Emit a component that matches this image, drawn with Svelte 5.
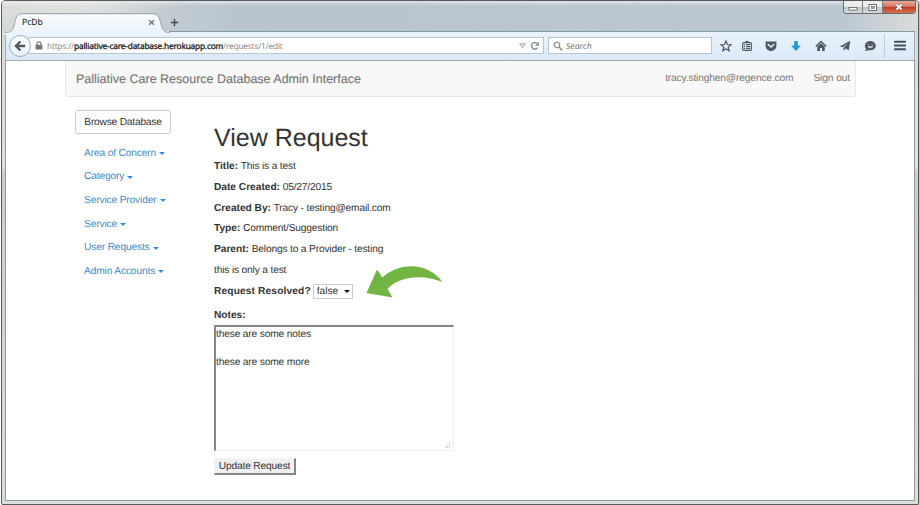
<script>
  const menu = ['Area of Concern', 'Category', 'Service Provider', 'Service', 'User Requests', 'Admin Accounts'];
  const details = [
    ['Title:', 'This is a test'],
    ['Date Created:', '05/27/2015'],
    ['Created By:', 'Tracy - testing@email.com'],
    ['Type:', 'Comment/Suggestion'],
    ['Parent:', 'Belongs to a Provider - testing'],
    ['', 'this is only a test']
  ];
  let resolved = $state('false');
  let notes = $state('these are some notes\n\nthese are some more');
</script>

<div class="window">
  <header class="titlebar">
    <svg class="tab-shape" width="168" height="22" viewBox="0 0 168 22">
      <defs>
        <linearGradient id="tab" x1="0" y1="0" x2="0" y2="1">
          <stop offset="0" stop-color="#f8fbfe" />
          <stop offset="1" stop-color="#e9f2fb" />
        </linearGradient>
      </defs>
      <path d="M0 22V19.5C7 19.5 8 17 9.5 11C11 4 12 1 18 1H147C153 1 154 4 156 11C157.500 17 159 19.500 165 19.500V22Z" fill="url(#tab)" />
      <path d="M0 19.5C7 19.5 8 17 9.5 11C11 4 12 .7 18 .7H147C153 .7 154 4 156 11C157.500 17 159 19.500 165 19.500" fill="none" stroke="#909ba5" stroke-width=".9" />
    </svg>
    <div class="tab">
      <span>PcDb</span>
      <svg width="7" height="7" viewBox="0 0 7 7"><path d="M1 1.200L6 5.800M6 1.200L1 5.800" stroke="#717b84" stroke-width="1.500" /></svg>
    </div>
    <svg class="plus" width="9" height="9" viewBox="0 0 9 9"><path d="M4.500 .8V8.200M.8 4.500H8.200" stroke="#424b54" stroke-width="1.400" /></svg>
    <div class="controls">
      <span class="min"><svg width="18" height="12" viewBox="0 0 18 12"><rect x="5" y="6.500" width="8" height="2.500" fill="#fff" stroke="#5a5e62" stroke-width=".8" /></svg></span>
      <span class="max"><svg width="19" height="12" viewBox="0 0 19 12"><rect x="6" y="3.500" width="7.500" height="6" fill="#fff" stroke="#5a5e62" stroke-width=".9" /><rect x="8.300" y="5.500" width="3" height="2" fill="#aaa" stroke="#5a5e62" stroke-width=".6" /></svg></span>
      <span class="close"><svg width="32" height="12" viewBox="0 0 32 12"><path d="M13.500 3.500L18.500 8.500M18.500 3.500L13.500 8.500" stroke="#744" stroke-width="3" /><path d="M13.500 3.500L18.500 8.500M18.500 3.500L13.500 8.500" stroke="#fff" stroke-width="1.800" /></svg></span>
    </div>
  </header>

  <div class="toolbar">
    <div class="back">
      <svg width="12" height="12" viewBox="0 0 12 12"><path d="M11.200 6H2.500M6.400 1.500L1.900 6L6.400 10.500" fill="none" stroke="#4d5861" stroke-width="2.300" /></svg>
    </div>
    <div class="address">
      <svg class="lock" width="8" height="9" viewBox="0 0 8 9"><path d="M2 4V2.600C2 .2 6 .2 6 2.600V4" fill="none" stroke="#777" stroke-width="1.200" /><rect x=".6" y="3.700" width="6.800" height="4.800" rx=".6" fill="#777" /></svg>
      <span class="url">https://<b>palliative-care-database.herokuapp.com</b>/requests/1/edit</span>
      <svg class="drop" width="7" height="6" viewBox="0 0 7 6"><path d="M.7 .7H6.300L3.500 5.300Z" fill="#e4e6e8" stroke="#a4aab0" stroke-width=".9" /></svg>
      <svg class="reload" width="10" height="10" viewBox="0 0 10 10"><path d="M7.700 6.500A3.300 3.300 0 1 1 7 2.400" fill="none" stroke="#82909a" stroke-width="1.500" /><path d="M9 .7V4.700H5Z" fill="#82909a" /></svg>
    </div>
    <div class="search">
      <svg width="10" height="10" viewBox="0 0 10 10"><circle cx="3.900" cy="3.900" r="2.800" fill="none" stroke="#8b9095" stroke-width="1.300" /><path d="M6 6L9.300 9.300" stroke="#8b9095" stroke-width="1.700" /></svg>
      <i>Search</i>
    </div>
    <div class="icons">
      <svg class="star" viewBox="0 0 12 12"><path d="M6 1L7.400 4.500L11.100 4.700L8.200 7.100L9.200 10.800L6 8.800L2.800 10.800L3.800 7.100L.9 4.700L4.600 4.500Z" fill="none" stroke="#4d5861" stroke-width="1.200" /></svg>
      <svg viewBox="0 0 12 12"><rect x="1.700" y="2.600" width="8.600" height="7.800" rx="1" fill="#e5f0fa" stroke="#4d5861" stroke-width="1.200" /><path d="M3.700 2.500Q4 .8 6 .8Q8 .8 8.300 2.500" fill="#4d5861" /><path d="M3 4.600H4.100M5 4.600H9M3 6.500H4.100M5 6.500H9M3 8.400H4.100M5 8.400H9" stroke="#4d5861" stroke-width="1.100" /></svg>
      <svg viewBox="0 0 12 12"><path d="M.6 1.500H11.400V5.500C11.400 8.700 9 11 6 11C3 11 .6 8.700 .6 5.500Z" fill="#4d5861" /><path d="M3.200 4.500L6 7.100L8.800 4.500" fill="none" stroke="#e5f0fa" stroke-width="1.500" stroke-linecap="round" /></svg>
      <svg viewBox="0 0 12 12"><path d="M4.200 1H7.800V5.500H11L6 11L1 5.500H4.200Z" fill="#239bd7" /></svg>
      <svg viewBox="0 0 12 12"><path d="M.7 6.500L6 1.500L11.300 6.500" fill="none" stroke="#4d5861" stroke-width="1.400" /><path d="M2.300 6.600L6 3.200L9.700 6.600V11H7V8H5V11H2.300Z" fill="#4d5861" /></svg>
      <svg viewBox="0 0 12 12"><path d="M11.200 .8L9.800 10.300L6.600 8.500L4.600 11V7.800L9.500 3L3.600 7.300L.8 6.500Z" fill="#4d5861" /></svg>
      <svg viewBox="0 0 12 12"><ellipse cx="6.300" cy="5.700" rx="5.500" ry="4.600" fill="#4d5861" /><path d="M2.500 8L.8 11L6 10Z" fill="#4d5861" /><path d="M3.200 6.300C4.300 8.300 8.300 8.300 9.400 6.300Z" fill="#e5f0fa" /><path d="M3.500 4.400H5M7.600 4.400H9.100" stroke="#aeb9c3" stroke-width=".8" /></svg>
    </div>
    <div class="burger"><svg width="12" height="11" viewBox="0 0 12 11"><path d="M.8 1.700H11.200M.8 5.500H11.200M.8 9.300H11.200" stroke="#465059" stroke-width="1.900" stroke-linecap="round" /></svg></div>
  </div>

  <div class="page">
    <nav class="navbar">
      <span class="brand">Palliative Care Resource Database Admin Interface</span>
      <span class="user">tracy.stinghen@regence.com</span>
      <span class="signout">Sign out</span>
    </nav>
    <div class="columns">
      <aside>
        <button class="browse">Browse Database</button>
        <ul>
          {#each menu as item}
            <li><span>{item}</span><i class="caret"></i></li>
          {/each}
        </ul>
      </aside>
      <main>
        <h1>View Request</h1>
        {#each details as [label, value]}
          <p>{#if label}<b>{label}</b>&nbsp;{/if}{value}</p>
        {/each}
        <div class="resolve">
          <b>Request Resolved?</b>
          <button class="select" onclick={() => (resolved = resolved === 'false' ? 'true' : 'false')}><span>{resolved}</span><i></i></button>
          <svg class="arrow" width="78" height="33" viewBox="0 0 78 33"><path d="M.5 28L11 4.500L16.500 12.500C31 -1.500 60 -5 76.500 17C57 9 33 11 21.500 24L26.500 32.500Z" fill="#72b544" /></svg>
        </div>
        <label for="notes">Notes:</label>
        <div class="area">
          <textarea id="notes" bind:value={notes} spellcheck="false"></textarea>
          <svg class="grip" width="8" height="7" viewBox="0 0 8 7"><path d="M5 1.500H7M3 3.500H7M1 5.500H7" stroke="#bbb" stroke-width="1" stroke-dasharray="1 1" /></svg>
        </div>
        <button class="update">Update Request</button>
      </main>
    </div>
  </div>
</div>

<style>
  :global(body) { margin: 0; background: #fff; }
  * { box-sizing: border-box; }
  svg { display: block; flex: none; }
  .window {
    width: 918px; height: 505px; margin-left: 1px; overflow: hidden;
    display: flex; flex-direction: column;
    padding: 0 3px 3px;
    border: 1px solid #555b5d; border-radius: 5px 5px 2px 2px;
    border-top-color: #56585e;
    background: linear-gradient(180deg, #d5dbd8 0, #dfe3df 33%, #c8d0cb 34%, #d9dfda 100%);
    font-family: "Liberation Sans", Arial, sans-serif;
    text-rendering: geometricPrecision;
    box-shadow: 2px 0 0 #c4c4c4;
  }
  .titlebar {
    height: 30px; flex: none; margin: 0 -3px; padding: 0 2px 0 4px; display: flex; position: relative;
    background:
      linear-gradient(180deg, #eef1f0b0 0, #ffffff00 5px),
      radial-gradient(ellipse 100px 26px at 70px 3px, #e3e5e2, #e3e5e200),
      linear-gradient(90deg, #d6dad6 0, #c9d0d3 110px, #b8c4ce 240px, #bac6d0 840px, #d9dcd9 100%);
  }
  .titlebar::after { content: ""; position: absolute; right: 3px; left: 167px; bottom: -1px; height: 1px; background: #8898a5; }
  .tab-shape { position: absolute; left: 3px; top: 12px; z-index: 1; }
  .tab { position: relative; z-index: 2; width: 133px; margin: 12px 0 0 16px; height: 18px; display: flex; align-items: center; justify-content: space-between; font: 8.600px "Noto Sans", sans-serif; color: #111; }
  .plus { margin: 17px 0 0 15px; }
  .controls { margin-left: auto; height: 13px; display: flex; border: 1px solid #666c70; border-top: 0; border-radius: 0 0 4px 4px; overflow: hidden; }
  .controls span + span { border-left: 1px solid #7d7f80; }
  .min, .max { background: linear-gradient(#eceeed 0 45%, #bfc4c6 50%, #d6d9d9); }
  .close { background: linear-gradient(#e6a797 0, #d57b66 45%, #bd3c24 50%, #d9704f); }
  .toolbar {
    height: 30px; flex: none; display: flex; align-items: center;
    border: solid #a1abb3; border-width: 0 1px 1px;
    background: linear-gradient(#eaf3fc, #dbe9f7);
  }
  .back { z-index: 3; width: 22px; height: 22px; margin-left: 3px; border: 1px solid #a4adb5; border-radius: 50%; background: linear-gradient(#fbfdff, #eaf1f9); display: grid; place-items: center; }
  .address { margin-left: -3px; width: 516px; height: 17px; padding: 0 3px 0 6px; display: flex; align-items: center; background: #fff; border: 1px solid #b8c6d2; font: 8.300px "Noto Sans", sans-serif; color: #888; }
  .url { margin: 2px 0 0 4px; white-space: nowrap; letter-spacing: -.2px; }
  .url b { color: #222; font-weight: 400; -webkit-text-stroke: .3px #222; letter-spacing: -.19px; }
  .drop { margin-left: auto; }
  .reload { margin-left: 4px; }
  .search { margin-left: 4px; width: 164px; height: 17px; padding-left: 4px; display: flex; align-items: center; gap: 3px; background: #fff; border: 1px solid #b8c6d2; font: 8.600px "Noto Sans", sans-serif; color: #777; }
  .icons { display: flex; gap: 12.650px; margin-left: 8px; }
  .icons svg { width: 12px; height: 12px; }
  .icons .star { margin-right: -4px; }
  .burger { margin-left: auto; height: 24px; padding: 0 8px 0 9px; display: flex; align-items: center; border-left: 1px solid #c3ced9; }
  .page { flex: 1; min-height: 0; background: #fff; border: 1px solid #959b9b; border-top: 0; font-size: 10.200px; letter-spacing: -.2px; line-height: 14px; color: #333; }
  .navbar { margin: 0 58px 0 59px; height: 36px; padding: 1px 5px 0 10px; display: flex; align-items: center; background: #f8f8f8; border: 1px solid #e7e7e7; border-top: 0; border-radius: 0 0 3px 3px; color: #777; white-space: nowrap; }
  .brand { font-size: 12.500px; letter-spacing: 0; -webkit-text-stroke: .15px #777; }
  .user { margin-left: auto; letter-spacing: -.14px; }
  .signout { margin-left: 20px; letter-spacing: -.1px; }
  .columns { display: flex; margin-left: 69px; }
  aside { width: 139px; padding-top: 13px; }
  button { font: inherit; color: #333; text-rendering: inherit; letter-spacing: inherit; padding: 0; }
  .browse { width: 96px; height: 24px; padding-top: 1px; display: block; background: #fff; border: 1px solid #ccc; border-radius: 3px; }
  ul { list-style: none; margin: 8px 0 0; padding: 0 0 0 9px; letter-spacing: -.14px; }
  li { height: 23.600px; display: flex; align-items: center; gap: 3px; color: #428bca; }
  .caret { border: 3px solid transparent; border-top-color: #428bca; border-bottom: 0; }
  main { padding-top: 27px; }
  h1 { margin: 0 0 8px; font-size: 25px; font-weight: 400; line-height: 28px; letter-spacing: 0; }
  p { margin: 0; height: 20.800px; line-height: 14px; white-space: nowrap; letter-spacing: -.16px; }
  b, label { letter-spacing: -.02px; }
  .resolve { position: relative; height: 16px; margin-top: -1px; display: flex; align-items: center; gap: 2px; }
  .resolve b { letter-spacing: .13px; }
  .select { width: 40px; height: 15px; padding: 0 2px 0 3px; display: flex; align-items: center; justify-content: space-between; border: 1px solid #ccc; background: #fff; line-height: 12px; letter-spacing: 0; }
  .select i { border: 3px solid transparent; border-top-color: #111; border-bottom: 0; }
  .arrow { position: absolute; left: 151.500px; top: -18.500px; }
  label { display: block; margin-top: 9px; height: 16px; font-weight: 700; line-height: 14px; }
  .area { position: relative; width: 240px; height: 126px; }
  textarea { display: block; width: 240px; height: 126px; padding: 1px 0 0 0; resize: none; outline: 0; border: solid #858585; border-width: 2px 1px 1px 2px; border-right-color: #eee; border-bottom-color: #eee; font: inherit; letter-spacing: -.15px; color: #333; background: #fff; text-rendering: inherit; overflow: hidden; }
  .grip { position: absolute; right: 2px; bottom: 2px; }
  .update { display: block; width: 82px; height: 17px; margin-top: 7px; padding-top: 1px; background: #f0f0f0; border: 1px solid #f5f5f5; border-right: 2px solid #858585; border-bottom: 2px solid #858585; line-height: 13px; letter-spacing: -.15px; }
</style>
